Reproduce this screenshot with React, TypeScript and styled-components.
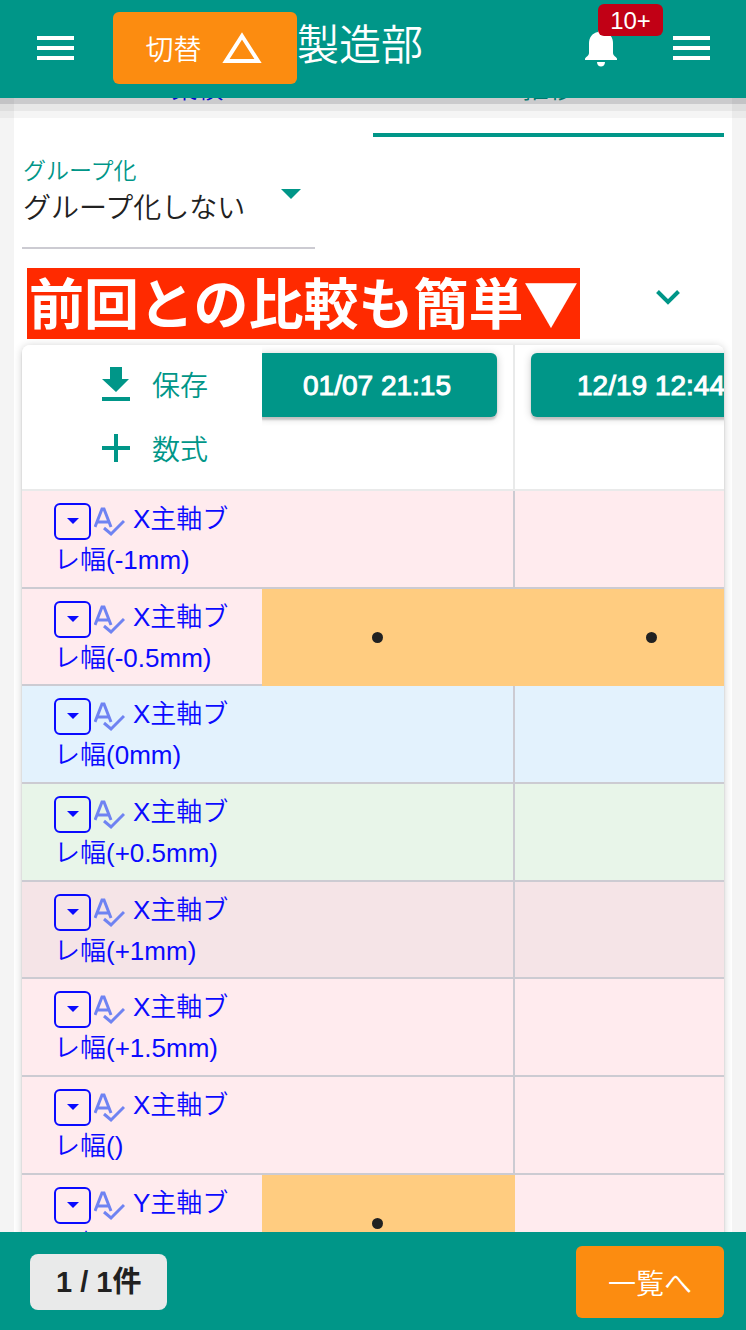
import React, { useLayoutEffect, useRef } from 'react';
import styled, { createGlobalStyle, css } from 'styled-components';

const teal = '#009688';
const orange = '#fc8c10';
const ink = '#212121';
const blue = '#0a0aff';
const line = '#cccbd2';

const GlobalStyle = createGlobalStyle`
  *, *::before, *::after { box-sizing: border-box; }
  body {
    margin: 0;
    background: #f4f4f4;
    color: ${ink};
    font-family: "Liberation Sans", "Noto Sans CJK JP", sans-serif;
    font-weight: 350;
  }
  button, select { font: inherit; color: inherit; }
`;

const Shell = styled.div`
  display: flex;
  flex-direction: column;
  height: 100vh;
  overflow: hidden;
`;

const bar = css`
  flex: none;
  display: flex;
  align-items: center;
  height: 98px;
  background: ${teal};
  color: #fff;
`;

const Header = styled.header`
  ${bar}
  position: relative;
  z-index: 2;
  padding: 0 24px 2px;
  box-shadow: 0 6px 0 rgba(0, 0, 20, 0.12), 0 13px 0 rgba(0, 0, 0, 0.05), 0 20px 0 rgba(0, 0, 0, 0.04);
`;

const IconButton = styled.button`
  position: relative;
  display: grid;
  place-items: center;
  flex: none;
  width: 62px;
  height: 72px;
  padding: 0;
  border: 0;
  background: none;
`;

const OrangeButton = styled.button<{ $width: number }>`
  display: flex;
  align-items: center;
  justify-content: center;
  gap: 20px;
  flex: none;
  width: ${(p) => p.$width}px;
  height: 72px;
  padding: 0;
  border: 0;
  border-radius: 6px;
  background: ${orange};
  color: #fff;
  font-size: 28px;
`;

const HeaderLead = styled.div`
  display: flex;
  align-items: center;
  gap: 27px;
`;

const Title = styled.h1`
  flex: 1;
  margin: 0;
  padding-bottom: 4px;
  font-size: 42px;
  line-height: 56px;
  font-weight: inherit;
`;

const HeaderActions = styled.div`
  display: flex;
  gap: 28px;
`;

const Badge = styled.span`
  position: absolute;
  top: -8px;
  left: 28px;
  width: 65px;
  height: 32px;
  border-radius: 6px;
  background: #c10015;
  font-size: 24px;
  line-height: 34px;
  text-align: center;
`;

const Main = styled.main`
  flex: 1;
  min-height: 0;
  overflow-y: auto;
  scrollbar-width: none;
  padding: 0 14px;
`;

const Panel = styled.section`
  background: #fff;
  padding: 0 8px;
`;

const Tabs = styled.nav`
  display: grid;
  grid-template-columns: 1fr 1fr;
`;

const Tab = styled.a<{ $active?: boolean }>`
  height: 72px;
  padding-top: 4px;
  border-bottom: 4px solid ${(p) => (p.$active ? teal : 'transparent')};
  color: ${(p) => (p.$active ? teal : blue)};
  font-size: 26px;
  line-height: 40px;
  text-align: center;
  text-decoration: none;
`;

const Field = styled.label`
  display: block;
  position: relative;
  width: 293px;
  height: 112px;
  padding: 16px 0 0 1px;
  border-bottom: 2px solid ${line};
  color: ${teal};
  font-size: 23px;
  line-height: 36px;

  svg {
    position: absolute;
    right: 14px;
    top: 52px;
    pointer-events: none;
  }
`;

const Select = styled.select`
  appearance: none;
  display: block;
  width: 100%;
  height: 40px;
  padding: 0;
  border: 0;
  background: none;
  color: ${ink};
  font-size: 28px;
`;

const Expander = styled.div`
  display: flex;
  align-items: center;
  justify-content: space-between;
  padding: 19px 25px 6px 5px;
`;

const Banner = styled.h2`
  margin: 0;
  padding: 0 2px 6px;
  background: #ff2a00;
  color: #fff;
  font-family: "Noto Sans CJK JP", sans-serif;
  font-size: 55px;
  line-height: 65px;
  font-weight: 700;
  white-space: nowrap;
`;

const ChevronButton = styled(IconButton)`
  height: 48px;
  margin-bottom: 12px;
  color: ${teal};
`;

const Scroller = styled.div`
  overflow-x: auto;
  scrollbar-width: none;
  border-radius: 8px 8px 0 0;
  box-shadow: 0 1px 8px rgba(0, 0, 0, 0.2), 0 2px 2px rgba(0, 0, 0, 0.14);
`;

const Table = styled.table`
  width: 788px;
  table-layout: fixed;
  border-collapse: separate;
  border-spacing: 0;
`;

const HeadCell = styled.th<{ $sticky?: boolean }>`
  height: 145px;
  padding: 8px 16px;
  border-bottom: 2px solid #e9eaea;
  background: #fff;
  vertical-align: top;
  font-weight: 400;
  ${(p) =>
    p.$sticky
      ? css`
          position: sticky;
          left: 0;
          z-index: 1;
          width: 240px;
        `
      : css`
          width: 274px;
          border-right: 2px solid #e9eaea;
        `}
`;

const ToolButton = styled.button`
  display: flex;
  align-items: center;
  gap: 20px;
  height: 64px;
  margin: 0 auto;
  padding: 0 0 2px 24px;
  border: 0;
  background: none;
  color: ${teal};
  font-size: 28px;
  font-weight: 350;
`;

const DateButton = styled.button`
  width: 100%;
  height: 64px;
  padding: 2px 0 0;
  border: 0;
  border-radius: 6px;
  background: ${teal};
  color: #fff;
  font-size: 28px;
  -webkit-text-stroke: 1px #fff;
  box-shadow: 0 1px 8px rgba(0, 0, 0, 0.2), 0 3px 2px rgba(0, 0, 0, 0.16);
`;

const cell = css<{ $tone: string }>`
  height: 98px;
  border-bottom: 2px solid ${line};
  background: ${(p) => p.$tone};

  tr:nth-child(3n + 2) > & {
    height: 97px;
  }
`;

const NameCell = styled.th<{ $tone: string }>`
  ${cell}
  position: sticky;
  left: 0;
  z-index: 1;
  padding: 8px 24px 5px 32px;
  color: ${blue};
  font-size: 26px;
  line-height: 41px;
  font-weight: 350;
  text-align: left;
  vertical-align: top;
  word-break: break-all;
`;

const MenuButton = styled.button`
  display: inline-grid;
  place-items: center;
  width: 37px;
  height: 37px;
  margin-right: 3px;
  padding: 0;
  border: 2px solid ${blue};
  border-radius: 6px;
  background: none;
  vertical-align: middle;
`;

const Spell = styled.svg`
  margin-right: 8px;
  vertical-align: middle;
  color: #6f83f2;
`;

const ValueCell = styled.td<{ $tone: string; $marked: boolean }>`
  ${cell}
  border-right: 2px solid ${line};
  padding: 0;
  text-align: center;
  ${(p) =>
    p.$marked &&
    css`
      border-color: #ffcc80;
      background: #ffcc80;
    `}
`;

const Dot = styled.span`
  display: inline-block;
  width: 11px;
  height: 11px;
  border-radius: 50%;
  background: ${ink};
  vertical-align: middle;
`;

const Footer = styled.footer`
  ${bar}
  position: relative;
  z-index: 2;
  justify-content: space-between;
  padding: 2px 22px 0 30px;
`;

const Count = styled.output`
  padding: 0 26px;
  border-radius: 8px;
  background: #e9eaea;
  color: ${ink};
  font-size: 29px;
  line-height: 56px;
  font-weight: 700;
`;

const pink = '#ffebee';

const rows = [
  { axis: 'X', range: '-1mm', tone: pink, marks: [false, false] },
  { axis: 'X', range: '-0.5mm', tone: pink, marks: [true, true] },
  { axis: 'X', range: '0mm', tone: '#e3f2fd', marks: [false, false] },
  { axis: 'X', range: '+0.5mm', tone: '#e8f5e9', marks: [false, false] },
  { axis: 'X', range: '+1mm', tone: '#f5e4e7', marks: [false, false] },
  { axis: 'X', range: '+1.5mm', tone: pink, marks: [false, false] },
  { axis: 'X', range: '', tone: pink, marks: [false, false] },
  { axis: 'Y', range: '-1mm', tone: pink, marks: [true, false] },
];

const dates = ['01/07 21:15', '12/19 12:44'];

const MenuIcon = () => (
  <svg width="38" height="24" viewBox="0 0 38 24" fill="currentColor" aria-hidden="true">
    <path d="M1 0h37v4H1zM1 10h37v4H1zM1 20h37v4H1z" />
  </svg>
);

const CaretIcon = ({ width, height }: { width: number; height: number }) => (
  <svg width={width} height={height} viewBox="0 0 20 10" preserveAspectRatio="none" fill="currentColor" aria-hidden="true">
    <path d="M0 0h20L10 10z" />
  </svg>
);

export default function App() {
  const mainRef = useRef<HTMLElement>(null);
  const tableRef = useRef<HTMLDivElement>(null);

  useLayoutEffect(() => {
    if (mainRef.current) mainRef.current.scrollTop = 33;
    if (tableRef.current) tableRef.current.scrollLeft = 21;
  }, []);

  return (
    <Shell>
      <GlobalStyle />
      <Header>
        <HeaderLead>
          <IconButton aria-label="メニュー">
            <MenuIcon />
          </IconButton>
          <OrangeButton $width={184}>
            切替
            <svg width="43" height="34" viewBox="0 0 43 34" fill="none" stroke="currentColor" strokeWidth="4" aria-hidden="true">
              <path d="M20 5 36 30H4z" />
            </svg>
          </OrangeButton>
        </HeaderLead>
        <Title>製造部</Title>
        <HeaderActions>
          <IconButton aria-label="通知">
            <svg width="32" height="38" viewBox="0 0 32 38" fill="currentColor" aria-hidden="true">
              <path d="M16 0c-2 0-3 1-3 3C7 4 4 9 4 14v10c0 3-4 4-4 6v1h32v-1c0-2-4-3-4-6V14c0-5-3-10-9-11 0-2-1-3-3-3zM12 33c0 3 2 4.500 4 4.500s4-1.500 4-4.500z" />
            </svg>
            <Badge>10+</Badge>
          </IconButton>
          <IconButton aria-label="設定メニュー">
            <MenuIcon />
          </IconButton>
        </HeaderActions>
      </Header>
      <Main ref={mainRef}>
        <Panel>
          <Tabs>
            <Tab href="#total">業績</Tab>
            <Tab href="#trend" $active>
              推移
            </Tab>
          </Tabs>
          <Field>
            グループ化
            <Select defaultValue="none">
              <option value="none">グループ化しない</option>
            </Select>
            <CaretIcon width={20} height={10} />
          </Field>
          <Expander>
            <Banner>前回との比較も簡単▼</Banner>
            <ChevronButton aria-label="開く">
              <svg width="24" height="15" viewBox="0 0 24 15" fill="none" stroke="currentColor" strokeWidth="4" aria-hidden="true">
                <path d="M1.500 1.500 12 12 22.500 1.500" />
              </svg>
            </ChevronButton>
          </Expander>
          <Scroller ref={tableRef}>
            <Table>
              <thead>
                <tr>
                  <HeadCell $sticky>
                    <ToolButton>
                      <svg width="32" height="34" viewBox="0 0 32 34" fill="currentColor" aria-hidden="true">
                        <path d="M10 0h12v12h7L16 25 2 12h8zM2 30h28v4H2z" />
                      </svg>
                      保存
                    </ToolButton>
                    <ToolButton>
                      <svg width="32" height="28" viewBox="0 0 32 28" fill="currentColor" aria-hidden="true">
                        <path d="M14 0h4v12h12v4H18v12h-4V16H2v-4h12z" />
                      </svg>
                      数式
                    </ToolButton>
                  </HeadCell>
                  {dates.map((date) => (
                    <HeadCell key={date}>
                      <DateButton>{date}</DateButton>
                    </HeadCell>
                  ))}
                </tr>
              </thead>
              <tbody>
                {rows.map((row) => (
                  <tr key={row.axis + row.range}>
                    <NameCell scope="row" $tone={row.tone}>
                      <MenuButton aria-label="操作">
                        <CaretIcon width={12} height={6} />
                      </MenuButton>
                      <Spell width="31" height="31" viewBox="0 0 31 31" fill="none" stroke="currentColor" strokeWidth="3" aria-hidden="true">
                        <path d="M1 21 8 3h2l7 18M4 16h10M10 22l7 6 13-13" />
                      </Spell>
                      {row.axis}主軸ブレ幅({row.range})
                    </NameCell>
                    {row.marks.map((marked, i) => (
                      <ValueCell key={dates[i]} $tone={row.tone} $marked={marked}>
                        {marked && <Dot role="img" aria-label="該当" />}
                      </ValueCell>
                    ))}
                  </tr>
                ))}
              </tbody>
            </Table>
          </Scroller>
        </Panel>
      </Main>
      <Footer>
        <Count>1 / 1件</Count>
        <OrangeButton $width={148}>一覧へ</OrangeButton>
      </Footer>
    </Shell>
  );
}
